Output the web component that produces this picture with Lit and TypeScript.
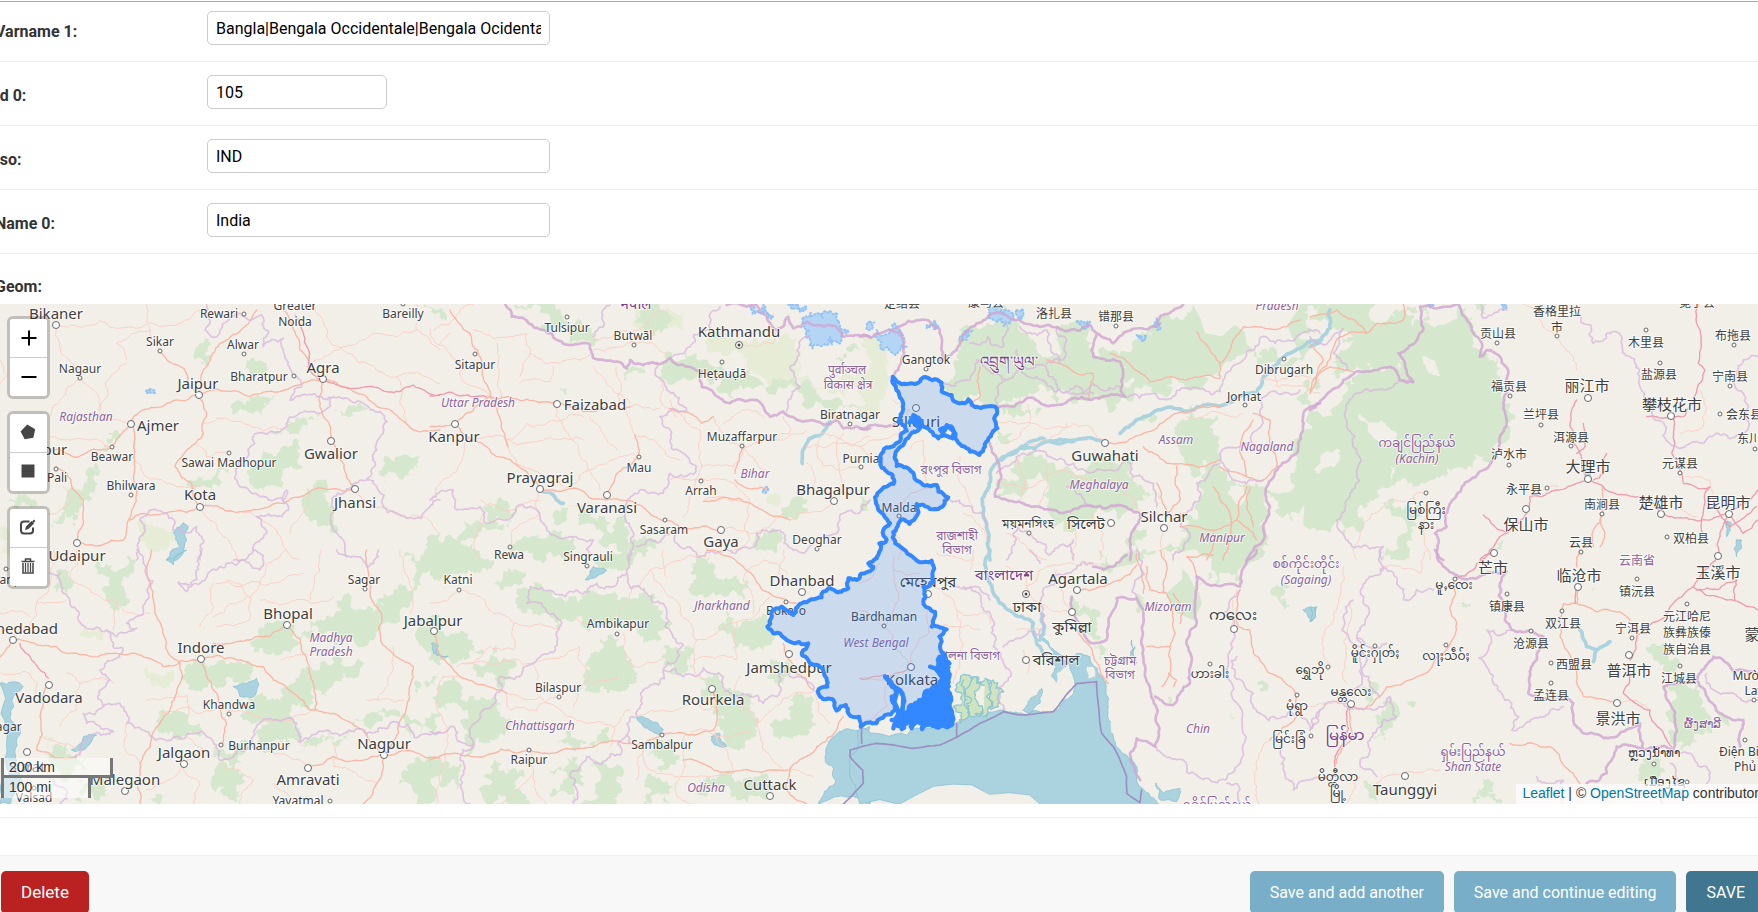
import { LitElement, html, svg, css } from "lit";
import { customElement, property } from "lit/decorators.js";

type Pt = [number, number];

/** One block of map features; its coordinates count in thirds of a pixel from (x, y). */
interface Tile {
  x: number;
  y: number;
  pale?: string[];
  forest: string[];
  bare?: string[];
  water: string[];
  glacier?: string[];
  rivers?: string[];
  borders: string[];
  states: string[];
  roads: string[];
  trunks?: string[];
  motorways?: string[];
}

const TILES: Tile[] = [
  {
    x: 0, y: 300,
    pale: ["420,660 540,680 560,740 470,760 410,720", "0,680 50,690 60,750 0,760"],
    forest: [
      "230,570 260,510 290,490 300,520 250,600 225,680 140,675", "325,400 345,390 330,430 310,450",
      "790,450 880,420 900,440 890,510 830,560 790,570 750,550 780,500", "810,400 860,375 960,340 950,360 850,395",
      "920,560 960,540 1000,700 960,680 910,620", "560,550 650,515 690,500 660,540 600,560 570,570",
      "690,320 760,290 830,270 790,310 700,345", "585,150 625,125 630,200 600,200", "1150,500 1260,470 1230,510 1160,550",
      "1210,770 1320,700 1320,780", "740,190 800,190 790,220 740,240", "1270,15 1320,20 1340,50 1300,40", "1000,330 1110,315 1060,345",
      "20,610 80,590 110,620 60,630",
    ],
    water: ["550,670 565,680 560,720 530,780 500,780 540,740 520,700"],
    glacier: ["438,273 465,273 465,279 438,279"],
    borders: [],
    states: [
      "620,15 630,60 615,90 650,110 670,70 740,55 785,45 790,140 850,115 860,180 890,230 905,260 870,300 950,290 1000,290 1090,310 1140,335 1150,400 1130,450 1110,530 1000,590 1010,700 1040,770",
      "1100,540 1130,560 1150,620 1290,620 1320,600", "1000,290 950,340 860,380 715,490 720,560 780,590 850,600 860,570 865,630 770,650 800,700 700,780",
      "410,780 430,700 420,660 500,640 520,690 590,680 610,730 600,780",
    ],
    roads: [
      "168,75 300,62 440,70 600,30", "168,75 180,140 240,230 180,300 150,350", "240,230 290,280 300,350 393,370", "150,410 240,415 335,440",
      "440,15 450,90 480,155", "380,180 350,130 450,90", "300,330 380,190", "610,370 700,365 880,370", "590,430 620,470 685,455",
      "1030,140 1130,100 1250,90 1320,150", "980,110 940,15", "980,110 1190,230 1200,300 1240,390", "1030,140 920,200", "1190,230 1320,250",
      "400,430 430,520 500,550 600,560", "190,560 210,610 170,640 130,640", "600,620 660,700 720,780", "720,635 850,740 900,780", "930,575 900,650 870,700",
      "1065,567 1180,640 1320,700", "1250,90 1250,15", "0,180 20,230 0,250",
    ],
    trunks: [
      "595,285 500,310 390,370 335,445 130,455", "480,155 595,285 750,290 880,260 965,240", "595,285 620,200 660,130 770,30",
      "965,240 960,320 993,425 1065,567 930,575 850,610 720,635 600,620 430,640 390,660", "965,240 1100,290 1240,390 1320,390",
      "965,240 900,150 850,30", "595,285 620,340 610,400 525,500 600,620", "400,380 405,500 385,660 370,720 232,725", "232,725 250,600 200,520 168,500",
    ],
    motorways: ["885,45 910,100 925,200 965,240 1060,265 1160,275 1240,255 1320,285"],
  },
  {
    x: 0, y: 550,
    pale: ["250,230 300,240 300,270 240,260", "440,350 520,360 510,400 450,390", "130,560 160,560 150,600"],
    forest: [
      "290,30 380,20 400,70 390,150 350,180 330,110 290,70", "170,60 200,50 220,90 200,130 170,100",
      "540,380 600,340 660,330 760,350 750,390 660,410 560,400", "720,500 800,440 880,400 960,350 1080,320 1080,360 1000,400 930,430 870,480 760,520",
      "750,280 880,255 880,290 760,310", "880,250 1000,200 1120,190 1150,130 1240,120 1250,60 1320,10 1320,60 1240,150 1140,180 1140,240 990,240 900,270",
      "770,540 880,505 900,570 1000,570 980,540 1110,490 1180,470 1200,500 1100,530 1030,560 920,590 850,580",
      "640,590 740,570 860,560 870,590 740,600 680,630 640,620", "470,510 600,520 600,560 490,550", "160,600 230,620 260,660 200,700 170,650",
      "1250,270 1320,200 1320,300", "1200,500 1320,490 1310,560 1230,560", "1240,400 1320,370 1320,420 1250,430", "230,680 330,690 320,740 220,750",
      "1230,640 1320,660 1320,740 1250,760", "680,640 720,660 720,740 690,750", "440,750 490,740 480,762",
    ],
    water: [
      "0,400 40,395 70,410 40,440 30,500 60,540 45,600 50,640 30,762 0,762", "215,600 250,560 290,555 250,600",
      "700,410 740,400 770,385 760,440 720,440", "500,30 560,0 530,20 520,45", "1295,285 1310,280 1300,300 1320,315 1298,305",
    ],
    borders: [],
    states: [
      "410,0 430,40 440,150 380,220 410,235 350,260 320,240 230,180 190,130 180,70 150,70",
      "320,240 370,300 300,360 330,390 300,420 310,470 360,460 380,520 480,565 640,575 655,625 700,620 760,560 770,530 860,505 890,520 895,575 990,545 1100,555 1180,515 1320,545",
      "310,470 250,490 260,520 340,545 250,570 225,620", "600,0 590,90 535,95 560,125 650,60 680,40 780,60 790,30 760,0", "1010,0 1100,50 1135,20 1135,0", "160,690 200,720 180,762",
    ],
    roads: [
      "600,230 640,100", "640,200 750,140 780,100 910,70", "680,90 750,140 750,210 650,230", "650,100 780,100 860,0", "930,150 960,60 960,0", "780,150 860,160 1000,140",
      "0,365 90,370 110,440", "200,370 240,400 340,400", "240,400 230,480 180,530", "160,0 110,160 40,270", "110,160 200,150", "230,0 210,80 330,150 450,190",
      "350,170 340,240", "120,560 180,580 240,610", "380,520 370,590 420,640", "480,485 600,490 690,480 930,485", "440,450 560,435 560,500",
      "560,560 610,600 551,640", "551,640 480,700 440,720", "580,762 600,700 551,640", "660,640 760,690 720,762", "820,700 920,760", "1000,580 1000,650 1130,700",
      "1100,450 1210,450", "1130,450 1180,350 1180,290", "840,330 920,310", "1200,0 1240,120 1230,190", "925,650 800,600", "0,190 50,185 90,200",
    ],
    trunks: [
      "40,270 170,290 200,310 350,310 490,350 600,330 700,325 790,350 820,390 880,430 930,480 1000,490 1100,555 1150,615",
      "455,0 470,200 500,300 540,340 540,400 530,430 470,530 420,640 420,762", "145,405 120,500 110,600 230,620", "603,327 640,420 680,520 664,585",
      "1100,0 1110,140 1145,190 1145,280 1240,350 1220,470 1150,615", "860,225 740,270 640,280", "860,225 920,330 945,480",
      "1150,615 1000,620 925,650", "1150,615 1130,700 1090,762", "1150,615 1320,625", "40,270 0,320",
    ],
    motorways: ["60,280 90,320 145,385"],
  },
  {
    x: 430, y: 300,
    pale: ["1000,120 1110,150 1100,230 950,190 830,150 900,110", "1110,190 1320,190 1320,310 1200,280 1120,250", "620,20 760,40 760,90 640,100", "1010,590 1050,590 1040,620 1010,610"],
    forest: [
      "250,15 400,50 420,90 490,110 490,140 420,130 330,80", "620,50 700,30 740,60 700,90 640,80",
      "680,180 800,160 880,180 960,210 1100,250 1170,290 1320,320 1320,350 1150,320 980,260 870,230 800,210 690,210",
      "580,200 640,190 640,220 590,240", "0,720 140,660 260,620 160,680 80,760 0,780", "160,620 240,620 230,660 170,660",
      "370,670 480,650 590,660 600,700 620,740 560,740 500,690", "280,730 400,720 440,740 350,780 240,780", "980,700 1040,690 1070,720 1000,750",
      "1080,610 1140,600 1120,640 1060,650", "600,740 680,720 720,730 680,745", "1210,160 1270,130 1290,150 1240,175", "1290,590 1320,600 1320,630", "390,265 410,270 400,285",
    ],
    water: [],
    glacier: ["960,20 1000,15 1030,50 990,40", "1075,15 1130,20 1110,35", "1120,80 1160,40 1220,60 1250,100 1200,110 1140,120", "1000,570 1015,568 1012,574 998,576"],
    rivers: ["1200,365 1150,410 1125,440 1117,490", "340,575 370,585 380,600 400,610"],
    borders: [
      "225,12 245,50 340,90 430,135 480,135 490,175 560,185 590,205 600,180 680,190 720,175 770,200 815,215 815,260 900,310 980,300 1020,350 1060,335 1180,375 1220,360 1240,385 1320,385",
      "890,15 950,20 980,15 1040,90 1075,50 1090,85 1130,65 1200,75 1240,110 1320,110",
    ],
    states: [
      "680,190 710,270 770,330 690,350 720,420 800,500 720,520 660,580 590,610 610,730 600,780", "540,15 520,80 490,110", "1140,110 1080,200 1110,260 1075,300 1070,335",
      "0,600 70,570 80,630 150,620 160,660 220,660 260,620 330,650 420,710 490,720 480,780", "870,20 830,90 780,140 720,175",
      "1320,600 1240,640 1220,700 1150,730 1100,750 1050,690 980,700 970,740 860,760 800,770 740,700 620,740",
    ],
    roads: [
      "0,90 60,160 180,290", "10,90 90,30 130,15", "130,90 160,100 290,100 300,160 270,230", "30,130 60,100", "300,160 390,190 480,165", "270,250 360,245 370,200",
      "200,130 215,290", "490,200 540,260 600,310", "560,200 570,320 615,405", "700,240 690,300 740,350", "600,320 690,325", "615,405 690,440 750,480", "480,350 530,420 560,450",
      "475,510 440,430 380,310", "475,510 530,490 630,470", "475,510 400,570 330,565", "475,510 510,570", "230,420 360,410 460,420", "230,420 290,370 460,350", "230,420 110,420 60,530 0,600",
      "230,420 250,470 400,560", "720,540 890,540 960,610", "720,300 760,350 810,390 815,500", "850,350 870,390 937,440", "880,370 960,330 1000,350", "937,440 1000,510", "937,440 1060,420 1130,390",
      "815,500 910,500 940,430", "1060,350 1080,400 1000,420", "1170,400 1320,410", "1130,440 1240,430 1320,470", "1130,490 1150,570 1210,600", "960,610 960,720 900,760", "960,610 820,605",
      "760,650 780,590 815,500", "873,690 960,700 1060,640", "1080,660 1210,605", "490,150 720,160", "1240,400 1240,560", "1170,400 1180,500 1290,500", "1040,90 1030,130 930,135", "700,30 640,80 560,100 490,120",
      "150,600 330,600", "150,780 160,640", "240,740 330,640 330,565",
    ],
    trunks: [
      "75,370 180,290 240,290 380,310 600,320", "75,370 200,470 330,565 530,600 610,605 705,660 870,690", "180,290 215,370 235,440", "615,405 625,470 530,585",
      "180,290 150,170 120,100 60,30", "720,325 815,370 850,350", "820,605 960,610 1080,660", "915,540 940,560 1010,565", "937,440 915,520", "0,380 75,370",
    ],
    motorways: ["0,288 130,290 170,290"],
  },
  {
    x: 430, y: 550,
    forest: [
      "0,0 140,0 190,30 120,60 40,80 0,60", "260,130 400,150 480,120 560,150 640,110 650,170 560,210 440,200 340,190 300,170",
      "480,310 560,290 610,330 600,400 540,430 460,400", "650,150 700,180 690,260 640,280 620,220", "700,290 780,280 790,350 740,370 700,350",
      "130,340 260,350 200,400 140,370", "200,430 220,500 170,580 100,620 90,510 150,450", "380,580 420,540 530,530 540,570 440,600",
      "350,650 440,620 460,680 430,760 360,740", "480,650 560,640 560,762 450,762", "180,650 280,660 300,762 170,762", "650,620 730,600 740,640 690,670",
      "810,380 880,390 960,430 970,500 960,570 880,550 850,480", "1030,510 1080,450 1140,440 1150,500 1100,560 1050,570",
      "810,700 900,660 1010,670 1020,720 920,750 830,740", "850,240 950,210 1020,240 1000,300 900,300", "1000,330 1080,340 1120,370 1060,400 1010,380",
      "790,60 840,20 880,90 960,100 940,150 800,140", "650,680 740,700 720,762 640,762", "0,270 80,250 160,300 60,330 0,320", "500,20 600,10 590,60 520,60",
      "20,420 90,400 80,460 20,460", "20,640 90,640 90,720 30,710", "200,90 290,60 280,110 210,120",
    ],
    water: [
      "490,50 530,60 500,80 465,90", "620,505 660,510 700,540 690,555 640,530", "845,560 870,550 890,590 850,580",
      "1230,545 1320,530 1320,762 1165,762 1215,700 1185,620 1200,570", "5,280 25,285 20,310 55,318 20,316",
    ],
    borders: [],
    states: [
      "600,0 590,70 650,130 700,160 705,230 760,285 740,330 700,360 640,420 620,500 590,555 600,580", "1045,370 1150,420",
      "590,70 550,110 500,100 440,120 300,110 290,160 390,210 385,240 310,340 210,380 160,480 130,590 90,630 120,762",
      "700,360 760,380 880,380 900,430 1000,460 1040,440 1045,370", "590,555 570,615 470,620 420,670 430,762", "0,545 60,530 90,575 130,580",
    ],
    roads: [
      "85,120 190,190 250,220 250,300 180,290 100,340", "85,120 0,160", "80,350 310,340 450,290 445,330 480,380 430,470", "250,220 310,225 390,240", "440,205 570,220 600,130 660,60",
      "580,250 610,350 700,320", "230,430 330,440 470,520 550,530", "230,430 240,480 385,440", "470,400 570,380", "310,340 320,390", "600,480 550,530 540,590", "660,60 720,140 800,270",
      "660,60 770,20 830,20", "800,270 790,350 830,390", "800,270 920,215 1020,130", "920,215 920,330 790,330", "940,90 970,190", "940,90 1000,30 1070,70", "930,380 920,460 980,520",
      "980,520 1090,430 1160,425", "1160,425 1200,520", "980,520 1000,600 1060,660", "640,600 660,660 760,680 910,670", "760,630 760,560 830,540 960,545", "620,690 640,600", "300,600 310,670 350,762",
      "310,670 200,762", "20,762 40,640 50,540 40,380 80,380", "760,630 740,740 780,762", "910,670 890,600 850,540", "1080,655 1150,680", "850,415 840,480 700,480 620,500", "700,0 710,80", "1060,0 1070,100",
    ],
    trunks: [
      "300,600 450,595 640,580 700,550 850,540", "300,600 130,620 0,630", "10,245 80,370 200,420 230,430", "830,0 940,50 1020,130 1100,160", "850,415 850,540",
      "760,630 910,665 1080,660", "1080,655 1160,590 1240,500", "1080,655 1070,720 1130,762", "1060,280 1150,420",
    ],
  },
  {
    x: 860, y: 300,
    pale: ["0,130 60,120 90,150 90,230 40,300 0,310", "0,310 60,310 60,340 0,345"],
    forest: [
      "240,240 300,180 330,80 400,50 470,60 530,80 600,80 690,90 710,170 780,190 790,290 690,300 590,315 500,295 420,320 380,320 310,300 240,270",
      "720,170 760,150 880,110 900,50 1000,15 1380,12 1380,100 1240,140 1160,150 1090,240 1000,270 880,280 790,290 790,200",
      "410,540 490,465 560,490 800,470 800,520 830,560 900,600 830,630 720,620 560,620 410,590", "430,325 560,320 540,340 430,345",
      "950,370 1070,345 1080,480 1010,530 960,460 940,420", "1010,560 1160,545 1210,560 1230,640 1190,780 930,780 960,690 1020,600",
      "1380,380 1380,560 1250,640 1230,570 1310,500", "415,390 460,400 440,430 415,420", "820,680 860,700 820,780 780,770", "840,350 900,345 880,365",
    ],
    bare: ["480,65 540,85 600,90 590,170 530,150 480,90", "1110,560 1150,560 1150,610 1120,600", "1190,780 1240,700 1330,660 1380,700 1380,780"],
    water: [],
    glacier: [
      "50,90 120,90 140,140 100,160 60,120", "390,40 440,30 460,50 430,80 400,60", "300,110 340,90 320,120", "200,75 235,80 220,90 200,85", "650,65 690,65 680,85",
      "830,105 860,105 850,125", "470,30 490,40 480,60", "890,55 900,90 890,80", "30,65 25,90 20,70",
    ],
    rivers: ["1380,120 1290,160 1240,200 1190,280 1100,310 1000,330 850,350 780,400", "740,430 640,425 540,415 430,470 400,500 375,580 370,650 390,780", "640,420 560,425 480,445 425,480"],
    borders: [
      "0,110 60,100 120,95 130,140 100,230", "100,90 200,60 240,90 240,180 290,150 350,70 400,40 480,60 560,75 690,75 710,100 700,170 780,185 795,290 690,300 590,315 500,295 410,325",
      "710,100 760,130 890,80 900,50 970,12", "390,430 410,480 405,590 520,620 700,620 840,640 820,690 810,780", "1380,310 1330,340 1310,460 1220,560 1230,620 1160,780",
      "0,385 40,375 80,380 120,370",
    ],
    states: [
      "1080,490 1010,550 1020,600 960,640 990,700 940,780", "795,290 880,280 980,265 1080,275 1090,240 1160,155 1260,120 1380,100", "1320,270 1200,330 1080,460 1090,490 1160,550 1210,540",
      "410,520 480,465 640,490 800,470 810,520 880,550 890,620", "560,190 610,180 620,120 590,85", "470,150 530,230 600,270 700,280", "330,130 430,140 440,70", "350,180 440,240 420,320",
      "240,250 330,240 360,180", "270,600 370,640 380,680", "620,560 700,620", "440,780 470,680 560,760 640,720 640,780", "480,80 500,100 560,90 600,190", "440,240 560,210 640,280 700,250 780,260",
    ],
    roads: [
      "410,360 520,370 640,370 735,430", "500,310 510,370 430,430", "620,370 560,420 500,430", "150,450 190,420 190,500 220,560", "220,560 150,580 110,620", "300,470 320,580 340,640", "310,640 380,720",
      "560,490 540,620", "410,540 480,560 550,540 640,520 700,560", "480,470 480,600", "750,480 790,580 840,630", "700,640 730,700 720,780", "440,700 500,740 560,780", "840,640 980,640",
      "1200,240 1380,250", "1240,200 1250,260 1380,280", "980,350 1150,340", "640,670 640,780", "910,700 910,780", "100,300 150,330 120,420", "340,780 230,760", "110,700 115,780", "0,440 60,420 120,400",
    ],
    trunks: [
      "560,180 640,215 700,220 690,300", "750,160 870,245 930,230 1080,235 1080,190 1010,95", "1080,190 1150,80 1320,60", "735,430 850,400 950,340 1080,320",
      "850,440 920,490 1010,500 1080,480", "1080,500 1160,530 1210,540 1250,500 1230,360 1180,340", "1160,530 1140,440 1180,360", "890,550 920,640 960,600 950,500", "960,680 1050,690 1130,660 1160,560",
      "1130,660 1190,720", "1040,780 1060,700", "1060,560 1110,640 1090,780", "1170,560 1180,680", "360,200 360,290 330,320",
    ],
  },
  {
    x: 860, y: 550,
    forest: [
      "720,0 1180,0 1140,100 1060,60 1000,80 860,10 760,50 720,60", "640,140 690,180 720,280 700,270 640,180", "830,140 850,140 850,190 835,190", "1260,110 1290,110 1290,170 1260,160",
      "700,290 730,290 720,330", "1110,490 1130,500 1115,510", "1195,395 1220,400 1205,425", "925,440 935,445 930,460",
    ],
    bare: ["850,10 1010,0 1050,60 1000,110 900,60"],
    water: [
      "0,532 280,522 430,480 490,492 560,490 600,470 630,440 640,380 610,330 650,310 690,320 730,390 745,470 780,600 830,670 895,762 0,762",
      "1330,180 1370,170 1350,215", "540,260 620,340 610,400 575,380 590,350", "790,340 815,270 810,320 800,340", "820,320 825,290 830,340", "888,700 910,730 960,715 950,755 900,750",
      "490,480 545,415 540,460 510,490",
    ],
    rivers: ["390,0 390,100 420,160 520,220 545,300 600,350", "545,190 540,270"],
    borders: [
      "635,140 700,280 740,270 770,145 830,145 850,300 880,450 885,590", "885,440 940,465 990,400 980,270 1010,220 1010,80 1140,110 1190,0", "885,590 830,565 810,610 840,690", "700,50 760,50 800,15",
    ],
    states: [
      "885,590 970,630 980,665 1050,690 1095,690 1130,650 1120,450 1120,270 1140,120", "1130,320 1180,430 1200,490 1320,490 1350,540 1380,480", "260,80 330,110 370,180 400,290 430,340 420,440 435,480",
      "430,290 470,265 540,260 540,180", "700,40 640,60 560,110 550,180", "1260,590 1270,660 1300,720 1380,680", "1100,700 1140,720 1130,762", "830,0 830,145", "510,0 540,40", "310,110 350,110 390,150",
    ],
    roads: [
      "220,90 290,180 300,250 280,400", "230,220 290,230 360,240", "290,180 380,190 390,220", "500,110 560,170 640,190", "500,110 540,60 640,40 720,50", "440,50 500,60 500,110", "490,300 500,370", "470,240 540,240",
      "100,20 110,120 70,230", "100,60 180,70", "70,230 150,350", "200,150 205,250 150,350", "0,180 70,230", "0,385 90,375", "90,375 80,470 20,510", "340,0 330,60", "1230,570 1190,650 1200,762", "1130,120 1120,240",
      "0,100 60,40", "590,60 610,140 640,190",
    ],
    trunks: [
      "860,50 870,120 920,130 930,290 860,290", "930,290 925,380 905,410", "925,370 950,390 940,410", "650,240 690,290 730,380 745,400", "900,0 910,130", "1010,80 980,20 1060,15", "655,120 720,110 830,45",
      "1140,120 1135,230 1170,240 1180,310 1230,370 1310,435 1310,500 1230,570", "150,350 90,380 0,385", "830,10 850,130", "940,130 970,180 960,220",
    ],
  },
  {
    x: 1310, y: 300,
    forest: [
      "290,20 450,12 510,150 570,170 580,310 600,320 600,410 570,430 540,490 450,500 380,530 320,560 250,560 180,600 160,660 30,690 0,690 0,330 100,250 200,200 260,200 310,250 270,160 340,70",
      "0,12 60,12 200,70 330,12 340,70 270,150 290,240 200,200 100,240 0,320 0,190 80,200 130,110 0,60", "220,610 310,580 320,680 300,780 220,780", "560,730 580,720 580,750 560,750", "490,12 530,15 530,40 500,30",
    ],
    bare: ["335,170 370,180 395,230 350,210", "10,510 40,460 90,450 80,490 30,520", "150,340 260,410 240,430 150,360", "220,620 240,500 260,500 250,570 320,560 300,600 230,600", "0,160 60,120 130,120 70,240 0,270"],
    water: ["820,480 845,510 835,530 815,510", "1245,660 1265,670 1250,710", "1280,720 1295,720 1280,770"],
    glacier: ["575,12 585,15 580,30", "355,12 370,15 360,22"],
    rivers: ["60,30 50,100 0,140"],
    borders: ["0,330 100,240 190,210 240,200 270,240 310,245 265,160 340,90 330,20 440,12 480,70 510,170 530,150 570,170 580,310 570,430 480,540 420,610 410,680 375,700 380,760 400,780"],
    states: [
      "310,250 200,270 140,280 110,380 140,520 110,600 80,660 140,740 220,740 215,780", "800,40 850,130 910,95 960,170 990,260 1030,330 1080,430 1110,445 1220,400 1300,400 1300,280 1280,220 1344,170",
      "0,110 100,85 70,160 110,210", "515,15 520,55 590,30",
    ],
    roads: ["140,780 150,700 240,600 340,580", "350,650 360,780", "640,12 690,50 740,110 800,210", "1170,270 1180,380 1110,400", "745,560 700,570", "1130,530 1200,540 1210,580", "1100,620 1160,650"],
    trunks: ["0,50 80,30 170,100 200,70 280,60 280,12", "0,270 60,200 130,215", "170,100 90,110 0,280", "878,560 880,640 850,690 850,740", "870,640 885,700 870,740", "20,240 40,180 0,130"],
    motorways: [
      "1165,12 1165,190 1185,210 1160,270 1120,350 1090,350 1095,430 1085,460 1110,510 1120,550 1200,560 1180,700", "510,780 590,700 650,640 660,590 740,570 830,540 880,560 990,590 1060,640 1200,660 1255,640 1344,570",
      "800,300 780,370 810,460 830,540", "520,645 590,700", "820,370 825,440 800,460", "1010,350 1090,350", "890,460 880,520 850,540", "1255,640 1230,700 1225,770", "1255,640 1300,700 1344,660", "1210,600 1260,680 1340,620",
    ],
  },
  {
    x: 1310, y: 550,
    forest: [
      "1060,410 1100,370 1170,400 1240,490 1260,530 1140,590 1100,580 1070,500", "1010,290 1110,340 1090,370 1030,330", "190,500 240,440 260,500 230,570 190,570", "220,0 290,0 260,30",
      "990,650 1060,630 1060,700 1000,690", "500,730 560,700 570,762 500,762", "150,420 180,390 170,470", "845,120 860,115 850,130", "285,450 320,450 300,465", "165,690 190,700 200,762 175,740", "455,155 480,160 470,175",
    ],
    water: ["0,170 15,175 18,200 0,215", "245,300 250,310 243,310"],
    rivers: ["810,240 830,290 860,300 850,335", "860,300 900,275"],
    borders: [
      "375,0 400,50 440,75 590,65 570,100 605,240 700,260 680,330 655,430 740,440 790,460 790,510 820,550 920,560 990,520 1000,600 920,590 890,670 830,700",
      "1000,600 1090,600 1095,490 1060,410 1160,390 1210,320 1344,370", "1160,390 1250,500 1300,510 1290,590",
    ],
    states: [
      "210,0 220,60 160,150 140,260 230,280", "210,60 280,150 370,120", "130,150 100,200 105,460", "600,240 530,240 550,400 605,460 605,540 690,500 760,470", "0,540 30,480 110,470 240,440 260,500 200,540 150,640 200,680",
      "1090,600 1190,650 1190,700", "1190,370 1260,430 1344,450", "140,260 180,400 210,440", "680,680 720,700 760,690 760,762", "1060,762 1080,640",
    ],
    roads: ["0,470 120,465", "200,700 390,660", "60,350 40,300 80,180 100,50", "120,150 110,400", "210,60 330,70 350,0", "1020,480 960,450 920,460", "150,680 110,762"],
    trunks: ["435,85 420,170 440,220 370,340 230,410 160,480 120,470", "600,580 720,590 810,700", "805,110 800,160 760,160 750,260 820,440 920,460", "800,160 930,185 960,210", "120,460 130,560 80,640", "810,0 800,50"],
    motorways: [
      "120,460 110,560 75,620 75,680", "550,10 490,60 435,85", "960,380 940,430 1020,480 1060,550 1085,590", "960,330 980,260 1050,210 1090,160 1150,110 1225,20", "1150,110 1250,150 1344,180", "1160,120 1280,90 1275,150", "800,110 795,160",
    ],
  },
];

type Mark = "o" | "O" | "C";
interface Label {
  text: string;
  x: number;
  y: number;
  kind: "small" | "large" | "state" | "area" | "country";
  mark?: [Mark, number, number];
}

const KINDS = { s: "small", l: "large", i: "state", a: "area", c: "country" } as const;

/** Each line: kind|text|centre x|baseline y[|mark|mark x|mark y]. */
const LABELS: Label[] = `
l|Bikaner|56|319|O|56|325
s|Rewari|219|318|o|244|314
s|Greater|295|310
s|Noida|295|326
s|Bareilly|403|318|o|403|304
s|Sikar|160|346|o|160|351
s|Alwar|243|349|o|244|354
s|Nagaur|80|373|o|80|378
s|Bharatpur|259|381|o|294|376
l|Agra|323|373|O|323|379
l|Jaipur|198|389|O|199|395
i|Rajasthan|86|421
l|Ajmer|158|431|O|131|424
s|Beawar|112|461|o|112|447
s|Sawai Madhopur|229|467|o|229|453
l|Gwalior|331|459|O|331|441
s|Pali|57|482|o|56|469
l|Jodhpur|39|455
s|Bhilwara|131|490|o|131|495
l|Kota|200|500|O|200|507
l|Jhansi|355|508|O|355|489
l|Udaipur|77|561|O|77|543
s|Palanpur|8|584|o|6|569
l|Ahmedabad|15|634|O|13|640
l|Vadodara|49|703|O|49|685
s|Bhavnagar|-9|731
l|Surat|27|772|O|27|752
s|Valsad|34|802|o|34|788
l|Malegaon|125|785|O|125|791
l|Jalgaon|184|758|O|184|764
s|Burhanpur|259|750|o|221|745
l|Amravati|308|785|O|308|768
s|Yavatmal|298|805|o|330|801
l|Nagpur|384|749|O|384|755
s|Khandwa|229|709|o|229|714
l|Indore|201|653|O|201|659
l|Bhopal|288|619|O|287|625
s|Sagar|364|584|o|365|589
i|Madhya|331|642
i|Pradesh|331|656
l|Jabalpur|433|626|O|434|631
s|Tulsipur|567|332|o|567|317
s|Butwāl|633|340|o|634|345
c|नेपाल|636|309
l|Kathmandu|739|337|C|739|345
s|Heṭauḍā|722|378|o|722|362
s|Sitapur|475|369|o|475|354
i|Uttar Pradesh|478|407
l|Faizabad|595|410|O|557|404
l|Kanpur|454|442|O|455|424
s|Muzaffarpur|742|441|o|742|446
s|Biratnagar|850|419|o|850|424
a|पुर्वाञ्चल|847|374
a|विकास क्षेत्र|848|389
s|Mau|639|472|o|639|457
l|Prayagraj|540|483|O|540|489
l|Varanasi|607|513|O|607|495
s|Arrah|701|495|o|701|481
i|Bihar|755|478
l|Bhagalpur|833|495|O|834|501
s|Purnia|861|463|o|861|467
s|Sasaram|664|534|o|665|520
l|Gaya|721|547|O|721|530
s|Deoghar|817|544|o|817|549
s|Rewa|509|559|o|510|547
s|Singrauli|588|561|o|587|566
s|Katni|458|584|o|459|590
l|Dhanbad|802|586|O|802|592
s|Bokaro|786|615|o|786|602
i|Jharkhand|722|610
s|Ambikapur|618|628|o|617|634
l|Jamshedpur|789|673|O|789|654
s|Bilaspur|558|692|o|559|697
l|Rourkela|713|705|O|712|689
i|Chhattisgarh|540|730
s|Raipur|529|764|o|529|750
s|Sambalpur|662|749|o|662|735
i|Odisha|706|792
l|Cuttack|770|790|O|770|796
s|Gangtok|926|364|o|926|369
l|Siliguri|916|427|O|916|408
a|রংপুর বিভাগ|951|474
s|Malda|899|512|o|899|516
a|রাজশাহী|957|540
a|বিভাগ|957|554
l|মেহেরপুর|928|587|O|928|594
s|Bardhaman|884|621|o|884|626
i|West Bengal|876|647
l|Kolkata|912|685|O|911|667
a|খুলনা বিভাগ|970|660
c|বাংলাদেশ|1004|580
l|ঢাকা|1027|612|C|1026|594
l|কুমিল্লা|1072|632|O|1072|612
l|বরিশাল|1056|665|O|1026|660
l|Agartala|1078|584|O|1077|590
a|চট্টগ্রাম|1120|665
a|বিভাগ|1120|679
i|Mizoram|1168|611
l|ကလေး|1233|620|O|1234|629
s|ဟားခါး|1210|678|o|1210|664
i|Chin|1198|733
s|ရွှေဘို|1310|674|o|1328|667
s|မုံရွာ|1297|710|o|1297|695
s|မြင်းခြံ|1289|743|o|1311|736
a|ရခိုင်ပြည်နယ်|1217|809
s|洛扎县|1054|318
s|错那县|1116|321|o|1116|326
s|定结县|902|308
s|康马县|986|307
c|འབྲུག་ཡུལ་|1009|367
i|Pradesh|1277|310
s|Dibrugarh|1284|374|o|1284|359
s|Jorhat|1244|401|o|1245|405
i|Assam|1176|444
i|Nagaland|1267|451
l|Guwahati|1105|461|O|1105|443
i|Meghalaya|1099|489
l|Silchar|1164|522|O|1164|528
i|Manipur|1222|542
s|ময়মনসিংহ|1028|528|o|1029|533
l|সিলেট|1086|529|O|1111|523
s|香格里拉|1557|316
s|市|1557|332|o|1557|336
s|冕宁县|1697|307
s|贡山县|1498|338|o|1497|343
s|木里县|1646|347|o|1646|330
s|布拖县|1733|340|o|1734|345
s|盐源县|1659|379|o|1660|363
s|宁南县|1730|381|o|1730|386
s|福贡县|1509|391|o|1510|396
l|丽江市|1587|391|O|1588|398
l|攀枝花市|1672|410|O|1671|416
s|会东县|1744|419|o|1720|414
s|兰坪县|1541|419|o|1541|425
s|洱源县|1571|442|o|1571|446
s|东川区|1755|443|o|1755|449
s|泸水市|1509|459|o|1509|465
s|元谋县|1680|468|o|1680|473
l|大理市|1588|472|O|1588|479
a|ကချင်ပြည်နယ်|1417|447
i|(Kachin)|1417|463
s|永平县|1524|494|o|1547|488
s|မြစ်ကြီး|1426|514|o|1426|493
s|နား|1426|529
s|南涧县|1602|509|o|1602|514
l|楚雄市|1661|508|O|1661|514
l|昆明市|1728|508|O|1729|514
l|保山市|1526|530|O|1526|509
s|云县|1581|547|o|1581|552
s|双柏县|1691|543|o|1667|537
a|云南省|1637|565
l|芒市|1493|573|O|1494|553
l|临沧市|1579|581|O|1578|587
l|玉溪市|1718|578|O|1718|556
s|မူႇၸေး|1454|589|o|1455|579
a|စစ်ကိုင်းတိုင်း|1306|568
i|(Sagaing)|1306|584
s|镇沅县|1637|596|o|1637|579
s|镇康县|1507|611|o|1507|594
s|双江县|1563|628|o|1562|611
s|宁洱县|1633|633|o|1632|638
s|元江哈尼|1687|621|o|1687|604
s|族彝族傣|1687|637
s|族自治县|1687|654
s|沧源县|1531|648|o|1531|631
l|蒙自市|1767|640
s|西盟县|1574|669|o|1551|663
l|普洱市|1629|676|O|1629|655
s|江城县|1679|683|o|1680|666
s|孟连县|1551|700|o|1551|683
l|景洪市|1618|724|O|1617|703
s|မိူင်းႁုတ်ႈ|1375|657|o|1375|646
s|လႃႈသဵဝ်ႈ|1446|660|o|1446|645
s|မန္တလေး|1351|696|O|1351|704
c|မြန်မာ|1345|740
a|ရှမ်းပြည်နယ်|1473|756
i|Shan State|1473|771
l|Taunggyi|1405|795|O|1405|776
s|မိတ္ထီလာ|1338|781
s|မြို့|1338|797
s|Mường|1753|680
s|Lay|1754|695|o|1754|700
s|Điện Biên|1746|756|o|1745|740
s|Phủ|1745|771
a|ຜົ້ງສາລີ|1702|728
s|ຫຼວງນ້ຳທາ|1654|757|o|1654|764
s|ເມືອງໄຊ|1664|786|o|1687|782`
  .trim()
  .split("\n")
  .map((line) => {
    const [k, text, x, y, m, mx, my] = line.split("|");
    return {
      text,
      x: +x,
      y: +y,
      kind: KINDS[k as keyof typeof KINDS],
      mark: m ? [m as Mark, +mx, +my] : undefined,
    };
  });

/** Small repeatable generator, so that the terrain keeps its shape between renders. */
function generator(seed: number) {
  let s = seed;
  return () => {
    s = (s * 1664525 + 1013904223) >>> 0;
    return s / 4294967296;
  };
}

/** Turns a coarse outline into a natural-looking one by displacing midpoints. */
function rough(source: string, amount: number, closed = false): string {
  let pts: Pt[] = source.split(" ").map((p) => p.split(",").map(Number) as Pt);
  if (closed) pts.push(pts[0]);
  const rnd = generator(Math.round(pts[0][0] * 31 + pts[0][1] * 17 + pts.length * 7));
  for (let level = 0; level < 4; level++) {
    const next: Pt[] = [pts[0]];
    for (let i = 1; i < pts.length; i++) {
      const [ax, ay] = pts[i - 1];
      const [bx, by] = pts[i];
      const dx = bx - ax;
      const dy = by - ay;
      if (Math.hypot(dx, dy) > 10) {
        const k = (rnd() - 0.5) * amount;
        next.push([(ax + bx) / 2 - dy * k, (ay + by) / 2 + dx * k]);
      }
      next.push([bx, by]);
    }
    pts = next;
  }
  return "M" + pts.map((p) => `${p[0].toFixed(1)} ${p[1].toFixed(1)}`).join("L") + (closed ? "Z" : "");
}

const lines = (list: string[] | undefined, amount: number) => (list ?? []).map((l) => rough(l, amount)).join("");
const areas = (list: string[] | undefined, amount: number) => (list ?? []).map((l) => rough(l, amount, true)).join("");

const REGION =
  "458,50 470,65 500,72 525,72 550,52 605,68 605,95 635,105 645,125 675,130 685,118 770,145 772,205 745,235 735,260 718,285 690,275 665,258 645,235 640,210 620,195 610,215 595,235 570,212 545,195 520,165 515,185 540,205 510,225 490,255 468,275 470,318 500,322 545,370 590,375 595,395 625,412 610,437 530,432 532,465 508,492 485,478 458,532 510,585 575,602 580,665 550,680 550,725 585,755 575,800 620,808 598,830 600,860 615,885 620,960 625,1000 630,1090 560,1060 520,1040 490,1060 488,1000 455,980 435,950 455,975 470,1000 455,1020 465,1050 410,1090 362,1100 358,1070 325,1060 318,1035 290,1052 280,1020 240,1010 233,995 262,980 250,935 210,910 185,880 205,850 150,845 120,820 100,820 82,800 95,755 125,740 160,765 185,730 245,712 265,685 305,695 325,685 325,655 350,660 385,635 400,620 385,610 415,585 418,550 440,540 430,510 450,490 415,450 412,400 440,380 460,372 458,345 435,330 420,290 440,262 500,212 475,185 488,140 475,95";

const DELTA =
  "592,925 598,890 616,890 616,930 625,960 622,985 630,1000 625,1040 632,1065 628,1098 605,1088 595,1103 572,1093 546,1108 540,1090 515,1105 505,1085 485,1108 485,1060 505,1055 520,1035 552,1025 555,995 575,985 598,975 600,945";

const CREEKS =
  "M435 950L455 975L480 990L490 1010L488 1050L470 1070L460 1105M455 1010L470 1040L478 1075L455 1080M470 1000L462 1030L480 1060M570 920L585 925L600 940";

@customElement("admin-field")
class AdminField extends LitElement {
  @property() label = "";
  @property() value = "";
  @property() type = "text";

  static styles = css`
    :host {
      display: flex;
      border-bottom: 1px solid #eee;
      padding: 13px 0 16px;
    }
    label {
      box-sizing: border-box;
      flex: 0 0 212px;
      margin-left: -5px;
      padding-top: 11px;
      font: bold 16px/19px Roboto, sans-serif;
      color: #333;
      white-space: nowrap;
    }
    input {
      box-sizing: border-box;
      width: 343px;
      height: 34px;
      margin: 0;
      padding: 5px 8px;
      border: 1px solid #ccc;
      border-radius: 5px;
      background: #fff;
      color: #000;
      font: 16px/20px Roboto, sans-serif;
      appearance: textfield;
    }
    input[type="number"] {
      width: 180px;
    }
    input::-webkit-inner-spin-button {
      appearance: none;
    }
  `;

  render() {
    return html`<label for="field">${this.label}</label><input id="field" type=${this.type} .value=${this.value} />`;
  }
}

@customElement("geometry-map")
class GeometryMap extends LitElement {
  static styles = css`
    :host {
      display: block;
      position: relative;
      height: 500px;
      overflow: hidden;
      background: #f2efe9;
    }
    .canvas {
      display: block;
      width: 100%;
      height: 100%;
    }
    .canvas path {
      fill: none;
      stroke-linejoin: round;
      stroke-linecap: round;
    }
    .canvas .pale { fill: #e6ecd6; }
    .canvas .forest { fill: #d5e7cd; }
    .canvas .bare { fill: #f2efe9; }
    .canvas .water { fill: #aad3df; stroke: #7fbdd0; stroke-width: 2; }
    .canvas .glacier { fill: #b4d6f4; stroke: #93c4f5; stroke-width: 6; stroke-dasharray: 4 8; }
    .canvas .river { stroke: #aad3df; stroke-width: 11; }
    .canvas .mangrove { fill: #cfe3c0; stroke: #8cc6cf; stroke-width: 4; }
    .canvas .border { stroke: #cfa5d1; stroke-width: 8; opacity: 0.8; }
    .canvas .boundary { stroke: #d8b6dc; stroke-width: 5; opacity: 0.75; }
    .canvas .maritime { stroke: #9c8ec2; stroke-width: 5; }
    .canvas .road { stroke: #fbcfc3; stroke-width: 3; }
    .canvas .trunk { stroke: #fab6a3; stroke-width: 4; }
    .canvas .motorway { stroke: #ee9bac; stroke-width: 4; }
    .canvas .region { fill: #3388ff; fill-opacity: 0.2; stroke: #3388ff; stroke-width: 12; }
    .canvas .delta { fill: #3388ff; stroke: #3388ff; stroke-width: 12; }
    .canvas .creeks { stroke: #3388ff; stroke-width: 13; }
    .mark { fill: #fff; stroke: #666; stroke-width: 1; }
    .dot { fill: #444; }
    text {
      font-family: "Noto Sans", "Noto Sans CJK SC", "Noto Sans Bengali", "Noto Sans Devanagari", "Noto Sans Myanmar", sans-serif;
      text-anchor: middle;
      fill: #3f3f3f;
      stroke: rgba(255, 255, 255, 0.7);
      stroke-width: 2px;
      stroke-linejoin: round;
      paint-order: stroke;
    }
    .small { font-size: 12px; }
    .large { font-size: 15px; }
    .state { font-size: 12px; font-style: italic; fill: #8d629a; }
    .area { font-size: 12px; fill: #8d629a; }
    .country { font-size: 15px; fill: #7b3f8c; }

    .controls {
      position: absolute;
      top: 12px;
      left: 7px;
      display: grid;
      gap: 12px;
    }
    .bar {
      display: grid;
      border: 3px solid rgba(0, 0, 0, 0.2);
      border-radius: 6px;
      background-clip: padding-box;
    }
    .bar button {
      display: grid;
      place-items: center;
      width: 37px;
      height: 38px;
      margin: 0;
      padding: 0;
      border: 0;
      background: #fff;
      color: #464646;
    }
    .bar button:first-child {
      height: 39px;
      border-bottom: 1px solid #ccc;
      border-radius: 3px 3px 0 0;
    }
    .bar button:last-child {
      border-radius: 0 0 3px 3px;
    }
    .tools button {
      padding: 0 1px 2px 0;
    }
    .bar svg {
      display: block;
      width: 18px;
      height: 18px;
    }
    .scale {
      position: absolute;
      left: 1px;
      bottom: 6px;
      display: grid;
      justify-items: start;
      color: #333;
      font: 14px/17px "Liberation Sans", Arial, sans-serif;
    }
    .scale div {
      box-sizing: border-box;
      height: 20px;
      padding: 1px 5px;
      border: 3px solid #777;
      border-top: 0;
      background: rgba(255, 255, 255, 0.5);
    }
    .metric { width: 112px; }
    .scale .imperial {
      width: 90px;
      border-top: 0;
      border-bottom: 0;
    }
    .credit {
      position: absolute;
      right: -14px;
      bottom: 0;
      padding: 0 6px 1px;
      background: rgba(255, 255, 255, 0.7);
      color: #333;
      font: 14px/19px "Liberation Sans", Arial, sans-serif;
      white-space: nowrap;
    }
    .credit a {
      color: #0078a8;
      text-decoration: none;
    }
  `;

  private terrain() {
    const at = (t: Tile) => `translate(${t.x} ${t.y}) scale(0.33333)`;
    return [
      TILES.map((t) => svg`<g transform=${at(t)}>
        <path class="pale" d=${areas(t.pale, 0.8)}></path>
        <path class="forest" d=${areas(t.forest, 1)}></path>
        <path class="bare" d=${areas(t.bare, 0.6)}></path>
        <path class="water" d=${areas(t.water, 0.35)}></path>
        <path class="glacier" d=${areas(t.glacier, 1.1)}></path>
        <path class="river" d=${lines(t.rivers, 0.3)}></path>
      </g>`),
      svg`<g transform="translate(860 550) scale(0.33333)">
        <path class="mangrove" d=${areas(["285,420 320,375 350,385 355,500 300,520 280,470", "350,380 400,390 415,470 380,500 350,490"], 0.9)}></path>
        <path class="mangrove" d=${lines(["310,390 320,450 305,510", "340,385 335,450 345,500", "375,385 380,440 370,500"], 0.8)}></path>
        <path class="bare" d=${areas(["590,370 615,350 635,400 625,440 600,445", "680,350 700,350 705,380 685,385", "755,510 775,510 770,550 755,550", "570,390 585,400 580,460 570,440"], 0.3)}></path>
        <path class="maritime" d=${lines(["-50,762 10,700 8,660 -30,620 -30,600 50,580 160,595 240,585 290,562 430,485 480,495 580,485 650,400 710,395 725,550 760,590 800,680 800,730 840,758 845,720", "290,562 290,520", "5,580 5,535"], 0.05)}></path>
      </g>`,
      TILES.map((t) => svg`<g transform=${at(t)}>
        <path class="road" d=${lines(t.roads, 0.35)}></path>
        <path class="trunk" d=${lines(t.trunks, 0.25)}></path>
        <path class="motorway" d=${lines(t.motorways, 0.25)}></path>
        <path class="boundary" d=${lines(t.states, 0.55)}></path>
        <path class="border" d=${lines(t.borders, 0.3)}></path>
      </g>`),
    ];
  }

  private places() {
    return [
      LABELS.filter((l) => l.mark).map(({ mark }) => {
        const [kind, x, y] = mark!;
        return svg`<circle class="mark" cx=${x} cy=${y} r=${kind === "o" ? 2 : 3.5}></circle>
          ${kind === "C" ? svg`<circle class="dot" cx=${x} cy=${y} r="1.5"></circle>` : null}`;
      }),
      LABELS.map((l) => svg`<text class=${l.kind} x=${l.x} y=${l.y}>${l.text}</text>`),
    ];
  }

  render() {
    return html`
      <svg class="canvas" role="img" aria-label="Map">
        <g transform="translate(0 -304)">
          ${this.terrain()} ${this.places()}
          <g transform="translate(740 360) scale(0.33333)">
            <path class="region" d=${rough(REGION, 0.4, true)}></path>
            <path class="delta" d=${rough(DELTA, 0.7, true)}></path>
            <path class="creeks" d=${CREEKS}></path>
            <path class="creeks" d="M600 208L625 200L642 215L638 235L612 225ZM508 188L520 168L530 185L545 195"></path>
          </g>
        </g>
      </svg>
      <div class="controls">
        <div class="bar">
          <button aria-label="Zoom in"><svg viewBox="0 0 18 18"><path d="M9 1.5V16.5M1.5 9H16.5" stroke="#000" stroke-width="2"></path></svg></button>
          <button aria-label="Zoom out"><svg viewBox="0 0 18 18"><path d="M1.5 9H16.5" stroke="#000" stroke-width="2"></path></svg></button>
        </div>
        <div class="bar tools">
          <button aria-label="Draw a polygon"><svg viewBox="0 0 18 18"><path d="M8.2 1.5L16.2 6.3L14.3 14.8L5.7 16.3L1.6 8.6Z" fill="currentColor"></path></svg></button>
          <button aria-label="Draw a rectangle"><svg viewBox="0 0 18 18"><path d="M2.5 2.5H15.5V15.5H2.5Z" fill="currentColor"></path></svg></button>
        </div>
        <div class="bar tools">
          <button aria-label="Edit layers"><svg viewBox="0 0 18 18" fill="none" stroke="currentColor" stroke-width="2"><path d="M10.5 3.5H5Q2 3.5 2 6.500V12.500Q2 15.500 5 15.500H11Q14 15.500 14 12.500V9.500"></path><path d="M6 12L7 8.500L12.500 3L15 5.500L9.500 11Z" fill="currentColor" stroke="none"></path><path d="M14 2.500L15.500 4" stroke-width="2.500"></path></svg></button>
          <button aria-label="Delete layers"><svg viewBox="0 0 18 18" fill="none" stroke="currentColor"><path d="M2.500 4.500H15.500M6.500 4V2H11.500V4" stroke-width="1.500"></path><path d="M4 6V16H14V6" stroke-width="1.500"></path><path d="M6.500 6V15M9 6V15M11.500 6V15" stroke-width="1.200"></path></svg></button>
        </div>
      </div>
      <div class="scale">
        <div class="metric">200 km</div>
        <div class="imperial">100 mi</div>
      </div>
      <div class="credit">
        <a href="https://leafletjs.com">Leaflet</a> | © <a href="https://osm.org/copyright">OpenStreetMap</a> contributors
      </div>
    `;
  }
}

@customElement("app-root")
class AppRoot extends LitElement {
  static styles = css`
    :host {
      display: block;
      height: 100vh;
      overflow: hidden;
      background: #fff;
      color: #333;
      font: 16px/19px Roboto, sans-serif;
    }
    form {
      margin: 0;
      border-top: 1px solid #fff;
    }
    .fields {
      border-top: 1px solid #aaa;
    }
    .first {
      padding-top: 9px;
    }
    .geometry {
      border-bottom: 1px solid #eee;
      padding: 23px 0 13px;
    }
    .geometry h2 {
      margin: 0 0 8px -5px;
      font: bold 16px/19px Roboto, sans-serif;
    }
    .actions {
      display: flex;
      justify-content: space-between;
      margin: 37px -7px 0 0;
      padding: 15px 0 15px 1px;
      border-top: 1px solid #eee;
      background: #f8f8f8;
    }
    .save {
      display: flex;
      gap: 10px;
    }
    .action {
      margin: 0;
      padding: 12px 20px;
      border: 0;
      border-radius: 5px;
      background: #79aec8;
      color: #fff;
      font: 16px/19px Roboto, sans-serif;
      text-decoration: none;
      white-space: nowrap;
    }
    .delete {
      background: #ba2121;
      font-size: 17px;
    }
    .default {
      background: #417690;
      text-transform: uppercase;
    }
  `;

  render() {
    return html`
      <form @submit=${(e: Event) => e.preventDefault()}>
        <div class="fields">
          <admin-field class="first" label="Varname 1:" value="Bangla|Bengala Occidentale|Bengala Ocidental"></admin-field>
          <admin-field label="Id 0:" type="number" value="105"></admin-field>
          <admin-field label="Iso:" value="IND"></admin-field>
          <admin-field label="Name 0:" value="India"></admin-field>
          <section class="geometry" aria-labelledby="geom">
            <h2 id="geom">Geom:</h2>
            <geometry-map></geometry-map>
          </section>
        </div>
        <div class="actions">
          <a class="action delete" href="#delete">Delete</a>
          <div class="save">
            <button class="action">Save and add another</button>
            <button class="action">Save and continue editing</button>
            <button class="action default">Save</button>
          </div>
        </div>
      </form>
    `;
  }
}
